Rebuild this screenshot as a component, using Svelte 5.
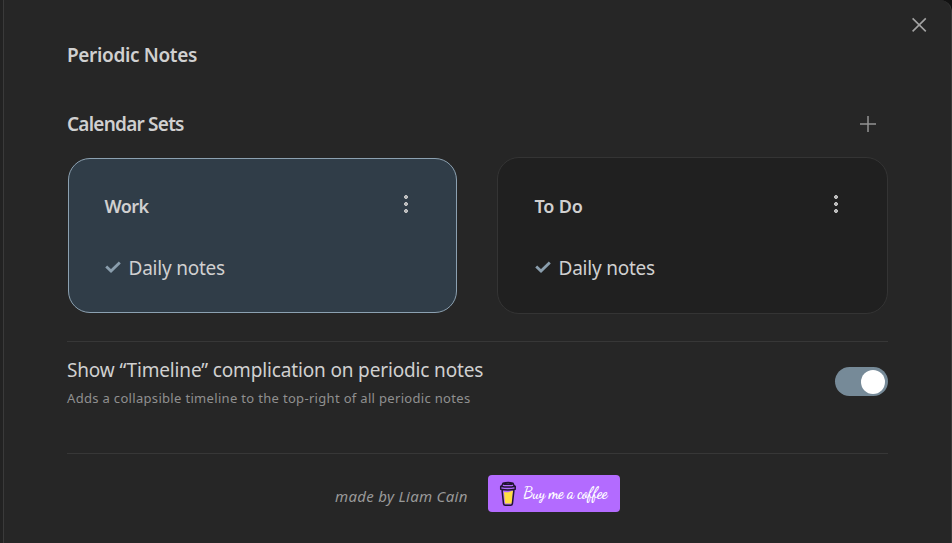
<script>
  const sets = [
    { name: 'Work', active: true },
    { name: 'To Do', active: false }
  ];
  let timeline = $state(true);
</script>

<div class="backdrop">
  <main class="modal">
    <button class="close" aria-label="Close">
      <svg width="16" height="16" viewBox="0 0 16 16"><path d="M1.6 1.4 14.8 14.4M14.8 1.4 1.6 14.4" /></svg>
    </button>

    <h2 class="title">Periodic Notes</h2>

    <div class="heading">
      <h3>Calendar Sets</h3>
      <button class="add" aria-label="Add calendar set">
        <svg width="16" height="16" viewBox="0 0 16 16"><path d="M8 0V16M0 8H16" /></svg>
      </button>
    </div>

    <section class="sets">
      {#each sets as set}
        <article class="card" class:active={set.active}>
          <header>
            <h4>{set.name}</h4>
            <button class="more" aria-label="More options">
              <svg width="6" height="20" viewBox="0 0 6 20">
                <circle cx="3" cy="3" r="1.5" /><circle cx="3" cy="10" r="1.5" /><circle cx="3" cy="17" r="1.5" />
              </svg>
            </button>
          </header>
          <div class="note">
            <svg width="16" height="12" viewBox="0 0 16 12"><path d="M1.2 5.5 6 10 14.8 1.4" /></svg>
            <span>Daily notes</span>
          </div>
        </article>
      {/each}
    </section>

    <section class="setting">
      <div>
        <div class="name">Show “Timeline” complication on periodic notes</div>
        <div class="desc">Adds a collapsible timeline to the top-right of all periodic notes</div>
      </div>
      <button class="toggle" class:on={timeline} aria-label="Show timeline" onclick={() => (timeline = !timeline)}><i></i></button>
    </section>

    <footer>
      <span class="made">made by Liam Cain</span>
      <div class="coffee">
        <svg width="18" height="26" viewBox="0 0 18 26">
          <path class="drink" d="M5 11 Q9 12 14 9.5L12.8 22.5H6Z" />
          <path class="cup" d="M3 8.7 4.5 22.6Q4.7 24.2 6.3 24.2H11.6Q13.2 24.2 13.4 22.6L15 8.7M1.7 5.2Q9 7 16.2 5.2V8.2Q9 9.6 1.7 8.2ZM2.8 5 4 2.2Q9 .6 14 2.2L15.2 5M4.5 3.3H13.5" />
        </svg>
        <span>Buy me a coffee</span>
      </div>
    </footer>
  </main>
</div>

<style>
  :global(body) { background: #171717; }
  .backdrop {
    box-sizing: border-box;
    width: 952px;
    height: 543px;
    padding-left: 3px;
    overflow: hidden;
    background: linear-gradient(90deg, #222 50%, #121212 50%);
    font-family: "Noto Sans", "Open Sans", sans-serif;
    color: #d0d0d0;
  }
  .modal {
    position: relative;
    box-sizing: border-box;
    width: 949px;
    height: 543px;
    padding: 40px 63px 0;
    border: solid #3a3a3a;
    border-width: 0 1px;
    border-radius: 0 12px 0 0;
    background: #262626;
  }
  h2, h3, h4 { margin: 0; font-weight: 600; }
  button { padding: 0; border: 0; background: none; display: flex; }
  svg { display: block; flex: none; }
  svg path { fill: none; }
  .close { position: absolute; left: 907px; top: 17px; }
  .close path { stroke: #a3a3a3; stroke-width: 1.6; }
  .title { height: 30px; line-height: 30px; font-size: 19px; letter-spacing: -0.35px; white-space: nowrap; }
  .heading { display: flex; justify-content: space-between; align-items: center; width: 809px; height: 30px; margin-top: 39px; }
  .heading h3 { line-height: 30px; font-size: 19px; letter-spacing: -0.77px; }
  .add path { stroke: #929292; stroke-width: 1.5; }
  .sets { display: flex; justify-content: space-between; align-items: center; width: 821px; height: 157px; margin-top: 18px; }
  .card { box-sizing: border-box; width: 391px; height: 157px; padding: 35px 36.5px 0; border: 1px solid #343434; border-radius: 22px; background: #202020; }
  .card.active { width: 389px; height: 155px; margin-left: 1px; padding: 34px 35.5px 0; border-color: #8ca1b1; background: #303d48; }
  .card header { display: flex; justify-content: space-between; height: 27px; }
  h4 { line-height: 26px; font-size: 18px; letter-spacing: -0.2px; }
  .active h4 { letter-spacing: -0.6px; }
  .more { margin: 1px 12px 0 0; height: 20px; }
  .more circle { fill: #aaa; stroke: #d6d6d6; stroke-width: 1; }
  .note { display: flex; align-items: center; gap: 8px; height: 30px; margin-top: 33px; font-size: 19px; letter-spacing: -0.22px; white-space: nowrap; }
  .note svg { margin-top: -2px; }
  .note path { stroke: #8a9ead; stroke-width: 2.8; }
  .setting { box-sizing: border-box; display: flex; justify-content: space-between; width: 821px; height: 112px; margin-top: 27px; padding-top: 14px; border-top: 1px solid #373737; white-space: nowrap; }
  .name { height: 30px; line-height: 28px; font-size: 19px; letter-spacing: -0.15px; }
  .desc { height: 24px; line-height: 24px; font-size: 13px; letter-spacing: 0.32px; color: #909090; }
  .toggle { box-sizing: border-box; align-items: center; width: 53px; height: 29px; margin-top: 11px; padding: 0 3px 0 2px; border-radius: 15px; background: #555; }
  .toggle.on { justify-content: flex-end; background: #768a98; }
  .toggle i { width: 24px; height: 24px; border-radius: 50%; background: #fff; }
  footer { box-sizing: border-box; display: flex; width: 821px; height: 80px; padding: 21px 0 0 268px; border-top: 1px solid #373737; }
  .made { width: 153px; line-height: 43px; font-size: 15px; font-style: italic; letter-spacing: 0.31px; color: #999; white-space: nowrap; }
  .coffee { box-sizing: border-box; display: flex; align-items: center; gap: 6px; width: 132px; height: 37px; padding-left: 11px; border-radius: 4px; background: #b36bff; }
  .coffee .drink { fill: #ffe042; }
  .coffee .cup { stroke: #201431; stroke-width: 1.5; stroke-linejoin: round; }
  .coffee span { margin-top: -2px; font: 700 15.5px "Dancing Script", "Segoe Script", cursive; letter-spacing: -0.35px; color: #fff; white-space: nowrap; }
</style>
